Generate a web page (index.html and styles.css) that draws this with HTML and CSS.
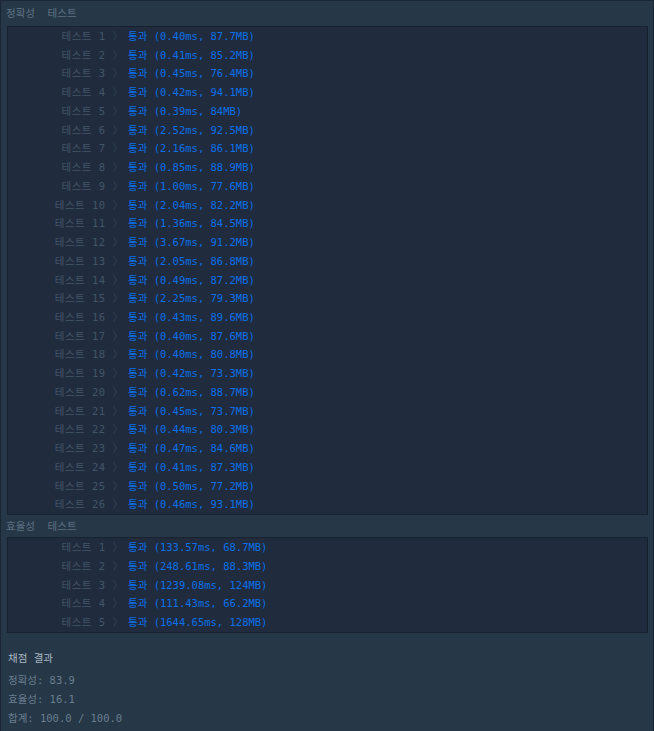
FILE: index.html
```html
<!DOCTYPE html>
<html lang="ko">
<head>
<meta charset="utf-8">
<title>채점 결과</title>
<link rel="stylesheet" href="styles.css">
</head>
<body>
<div class="panel">
  <div class="section-title first">정확성&nbsp; 테스트</div>
  <div class="box">
    <div class="row"><span class="label">테스트 1 <span class="chev">〉</span></span><span class="result">통과 (0.40ms, 87.7MB)</span></div>
    <div class="row"><span class="label">테스트 2 <span class="chev">〉</span></span><span class="result">통과 (0.41ms, 85.2MB)</span></div>
    <div class="row"><span class="label">테스트 3 <span class="chev">〉</span></span><span class="result">통과 (0.45ms, 76.4MB)</span></div>
    <div class="row"><span class="label">테스트 4 <span class="chev">〉</span></span><span class="result">통과 (0.42ms, 94.1MB)</span></div>
    <div class="row"><span class="label">테스트 5 <span class="chev">〉</span></span><span class="result">통과 (0.39ms, 84MB)</span></div>
    <div class="row"><span class="label">테스트 6 <span class="chev">〉</span></span><span class="result">통과 (2.52ms, 92.5MB)</span></div>
    <div class="row"><span class="label">테스트 7 <span class="chev">〉</span></span><span class="result">통과 (2.16ms, 86.1MB)</span></div>
    <div class="row"><span class="label">테스트 8 <span class="chev">〉</span></span><span class="result">통과 (0.85ms, 88.9MB)</span></div>
    <div class="row"><span class="label">테스트 9 <span class="chev">〉</span></span><span class="result">통과 (1.00ms, 77.6MB)</span></div>
    <div class="row"><span class="label">테스트 10 <span class="chev">〉</span></span><span class="result">통과 (2.04ms, 82.2MB)</span></div>
    <div class="row"><span class="label">테스트 11 <span class="chev">〉</span></span><span class="result">통과 (1.36ms, 84.5MB)</span></div>
    <div class="row"><span class="label">테스트 12 <span class="chev">〉</span></span><span class="result">통과 (3.67ms, 91.2MB)</span></div>
    <div class="row"><span class="label">테스트 13 <span class="chev">〉</span></span><span class="result">통과 (2.05ms, 86.8MB)</span></div>
    <div class="row"><span class="label">테스트 14 <span class="chev">〉</span></span><span class="result">통과 (0.49ms, 87.2MB)</span></div>
    <div class="row"><span class="label">테스트 15 <span class="chev">〉</span></span><span class="result">통과 (2.25ms, 79.3MB)</span></div>
    <div class="row"><span class="label">테스트 16 <span class="chev">〉</span></span><span class="result">통과 (0.43ms, 89.6MB)</span></div>
    <div class="row"><span class="label">테스트 17 <span class="chev">〉</span></span><span class="result">통과 (0.40ms, 87.6MB)</span></div>
    <div class="row"><span class="label">테스트 18 <span class="chev">〉</span></span><span class="result">통과 (0.40ms, 80.8MB)</span></div>
    <div class="row"><span class="label">테스트 19 <span class="chev">〉</span></span><span class="result">통과 (0.42ms, 73.3MB)</span></div>
    <div class="row"><span class="label">테스트 20 <span class="chev">〉</span></span><span class="result">통과 (0.62ms, 88.7MB)</span></div>
    <div class="row"><span class="label">테스트 21 <span class="chev">〉</span></span><span class="result">통과 (0.45ms, 73.7MB)</span></div>
    <div class="row"><span class="label">테스트 22 <span class="chev">〉</span></span><span class="result">통과 (0.44ms, 80.3MB)</span></div>
    <div class="row"><span class="label">테스트 23 <span class="chev">〉</span></span><span class="result">통과 (0.47ms, 84.6MB)</span></div>
    <div class="row"><span class="label">테스트 24 <span class="chev">〉</span></span><span class="result">통과 (0.41ms, 87.3MB)</span></div>
    <div class="row"><span class="label">테스트 25 <span class="chev">〉</span></span><span class="result">통과 (0.50ms, 77.2MB)</span></div>
    <div class="row"><span class="label">테스트 26 <span class="chev">〉</span></span><span class="result">통과 (0.46ms, 93.1MB)</span></div>
  </div>
  <div class="section-title">효율성&nbsp; 테스트</div>
  <div class="box">
    <div class="row"><span class="label">테스트 1 <span class="chev">〉</span></span><span class="result">통과 (133.57ms, 68.7MB)</span></div>
    <div class="row"><span class="label">테스트 2 <span class="chev">〉</span></span><span class="result">통과 (248.61ms, 88.3MB)</span></div>
    <div class="row"><span class="label">테스트 3 <span class="chev">〉</span></span><span class="result">통과 (1239.08ms, 124MB)</span></div>
    <div class="row"><span class="label">테스트 4 <span class="chev">〉</span></span><span class="result">통과 (111.43ms, 66.2MB)</span></div>
    <div class="row"><span class="label">테스트 5 <span class="chev">〉</span></span><span class="result">통과 (1644.65ms, 128MB)</span></div>
  </div>
  <div class="summary">
    <div class="summary-title">채점 결과</div>
    <div class="score">정확성: 83.9</div>
    <div class="score">효율성: 16.1</div>
    <div class="score">합계: 100.0 / 100.0</div>
  </div>
</div>
</body>
</html>
```

FILE: styles.css
```css
html, body {
  margin: 0;
  padding: 0;
  background: #263747;
}

body {
  font-family: "DejaVu Sans Mono", "Noto Sans CJK KR", monospace;
  font-size: 10.5px;
  color: #6f8394;
}

.panel {
  width: 652px;
  height: 730px;
  background: #263747;
  border: 1px solid #1a2634;
  border-bottom: none;
}

.section-title {
  height: 22px;
  line-height: 22px;
  padding: 0 0 0 5px;
  color: #5e7284;
  white-space: pre;
}

.section-title.first {
  height: 25px;
  line-height: 25px;
}

.box {
  margin: 0 5px 0 6px;
  background: #202b3d;
  border: 1px solid #18222f;
  border-right-color: #151e2b;
}

.row {
  display: grid;
  grid-template-columns: 115px 1fr;
  column-gap: 5px;
  height: 18.74px;
  line-height: 18.74px;
  white-space: pre;
}

.label {
  text-align: right;
  color: #435568;
  letter-spacing: 0.5px;
}

.chev {
  color: #334456;
  letter-spacing: 0;
}

.result {
  color: #0b70ea;
}

.summary {
  padding: 15px 0 0 7px;
}

.summary-title {
  height: 20px;
  line-height: 20px;
  color: #a9b8c4;
  margin-bottom: 3px;
}

.score {
  height: 19px;
  line-height: 19px;
  color: #6a7e8f;
}
```
